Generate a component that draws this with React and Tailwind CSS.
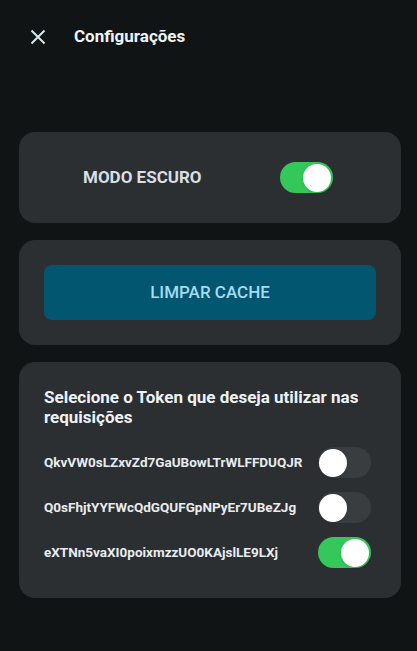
import { useState } from 'react';

const TOKENS = [
  { id: 1, value: 'QkvVW0sLZxvZd7GaUBowLTrWLFFDUQJR', active: false },
  { id: 2, value: 'Q0sFhjtYYFWcQdGQUFGpNPyEr7UBeZJg', active: false },
  { id: 3, value: 'eXTNn5vaXI0poixmzzUO0KAjslLE9LXj', active: true },
];

function Toggle({ checked, onChange }) {
  return (
    <button
      type="button"
      onClick={onChange}
      className={`relative w-[53px] h-[31px] rounded-full shrink-0 transition-colors ${
        checked ? 'bg-[#34c759]' : 'bg-[#393d40]'
      }`}
    >
      <span
        className={`absolute top-[1.5px] w-[28px] h-[28px] rounded-full bg-white shadow-sm transition-all ${
          checked ? 'left-[23px]' : 'left-[1px]'
        }`}
      />
    </button>
  );
}

export default function App() {
  const [darkMode, setDarkMode] = useState(true);
  const [tokens, setTokens] = useState(TOKENS);

  const selectToken = (id) =>
    setTokens((prev) => prev.map((t) => ({ ...t, active: t.id === id ? !t.active : false })));

  return (
    <div
      className="min-h-[651px] bg-[#101415] text-[#e8ecee]"
      style={{ fontFamily: 'Roboto, "Noto Sans", sans-serif' }}
    >
      {/* Header */}
      <header className="h-[73px] flex items-center px-[30px]">
        <button type="button" className="text-[#d6e6ee]">
          <svg width="16" height="16" viewBox="0 0 16 16" fill="none">
            <path d="M1.5 1.5L14.5 14.5M14.5 1.5L1.5 14.5" stroke="currentColor" strokeWidth="2" />
          </svg>
        </button>
        <h1 className="ml-[28px] text-[17px] font-bold text-[#eef2f4]">Configurações</h1>
      </header>

      <main className="pl-[19px] pr-[16px] pt-[59px] flex flex-col gap-[17px]">
        {/* Modo escuro */}
        <section className="h-[91px] bg-[#2b2f32] rounded-[16px] flex items-center pl-[64px] gap-[78px]">
          <span className="text-[17px] font-bold text-[#d9dfe2]">MODO ESCURO</span>
          <Toggle checked={darkMode} onChange={() => setDarkMode(!darkMode)} />
        </section>

        {/* Limpar cache */}
        <section className="bg-[#2b2f32] rounded-[16px] p-[25px]">
          <button
            type="button"
            className="w-full h-[55px] rounded-[8px] bg-[#03566f] text-[#a6dcf2] text-[17px] font-medium"
          >
            LIMPAR CACHE
          </button>
        </section>

        {/* Tokens */}
        <section className="bg-[#2b2f32] rounded-[16px] pt-[25px] pb-[30px] pl-[25px] pr-[30px]">
          <h2 className="text-[17px] font-bold leading-[20px] text-[#eef2f4]">
            Selecione o Token que deseja utilizar nas requisições
          </h2>
          <div className="mt-[20px] flex flex-col gap-[14px]">
            {tokens.map((t) => (
              <div key={t.id} className="flex items-center justify-between">
                <span className="text-[13.5px] font-bold text-[#e8ecee]">{t.value}</span>
                <Toggle checked={t.active} onChange={() => selectToken(t.id)} />
              </div>
            ))}
          </div>
        </section>
      </main>
    </div>
  );
}
